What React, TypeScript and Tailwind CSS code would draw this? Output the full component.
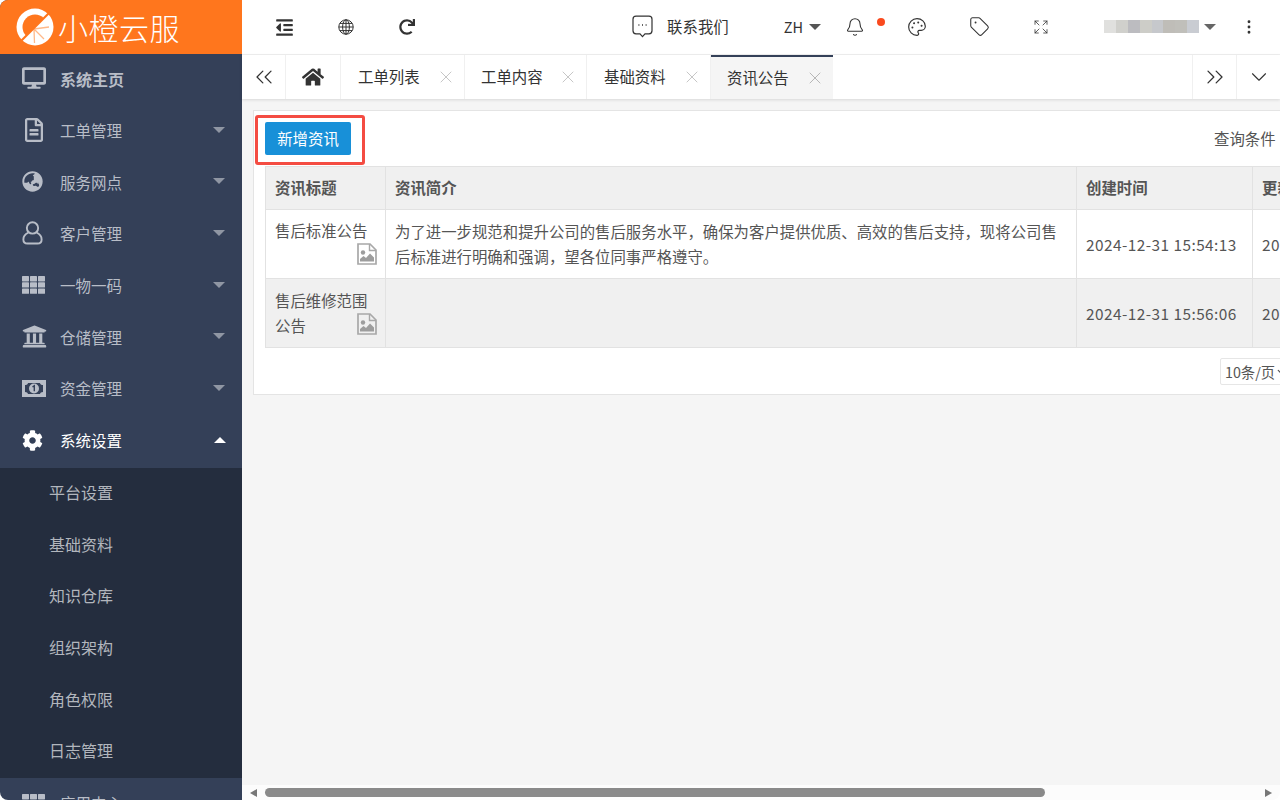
import { Bell, ChevronDown, ChevronsLeft, ChevronsRight, Expand, MoreVertical, Palette, Tag, X } from "lucide-react";
import { FaCog, FaDesktop, FaGlobeAsia, FaHome, FaOutdent, FaRedo, FaRegFileAlt, FaUniversity } from "react-icons/fa";

function UserIcon() {
  return (
    <svg width="21" height="24" viewBox="0 0 23 26" fill="none" stroke="currentColor" strokeWidth="2.1">
      <circle cx="11.5" cy="7.5" r="6.2" />
      <path d="M7 12.5 C3.5 14 1.5 17 1.5 20 C1.5 23 3.5 24.5 6 24.5 H17 C19.5 24.5 21.5 23 21.5 20 C21.5 17 19.5 14 16 12.5" />
    </svg>
  );
}

function GridIcon() {
  return (
    <svg width="23" height="18" viewBox="0 0 23 18" fill="currentColor">
      {[0, 6.2, 12.4].map((y) =>
        [0, 8, 16].map((x) => <rect key={`${x}-${y}`} x={x} y={y} width="7" height="5.4" rx="0.6" />),
      )}
    </svg>
  );
}

function MoneyIcon() {
  return (
    <svg width="24" height="17" viewBox="0 0 24 17">
      <path
        fillRule="evenodd"
        fill="currentColor"
        d="M0 0 H24 V17 H0 Z M6 3 C5.8 4.4 4.6 5 3 5 V12 C4.6 12 5.8 12.8 6 14 H18 C18.2 12.8 19.4 12 21 12 V5 C19.4 5 18.2 4.4 18 3 Z"
      />
      <circle cx="12" cy="8.5" r="5" fill="currentColor" />
      <path d="M10.5 6.8 L12.3 5.8 V11.2" fill="none" stroke="#344058" strokeWidth="1.4" />
    </svg>
  );
}

function ImageFileIcon({ className = "" }: { className?: string }) {
  return (
    <svg width="20" height="22" viewBox="0 0 20 22" className={className}>
      <path d="M1 1 H13 L19 7 V21 H1 Z" fill="none" stroke="#a8a8a8" strokeWidth="1.7" />
      <path d="M12.5 1 V7.5 H19" fill="none" stroke="#a8a8a8" strokeWidth="1.4" />
      <circle cx="6" cy="9.5" r="2.2" fill="#9d9d9d" />
      <path d="M3 18.5 V16 L6.5 13 L9 15 L13 10.5 L17 14.5 V18.5 Z" fill="#9d9d9d" />
    </svg>
  );
}

function GlobeIcon() {
  return (
    <svg width="16" height="16" viewBox="0 0 16 16" fill="none" stroke="#333" strokeWidth="1">
      <circle cx="8" cy="8" r="7.2" />
      <ellipse cx="8" cy="8" rx="3.4" ry="7.2" />
      <path d="M8 .8 V15.2 M.8 8 H15.2 M1.8 4.4 H14.2 M1.8 11.6 H14.2" />
    </svg>
  );
}

function ChatIcon() {
  return (
    <svg width="21" height="23" viewBox="0 0 21 23" fill="none" stroke="#333" strokeWidth="1.2">
      <path d="M4 1.2 H17 A3 3 0 0 1 20 4.2 V15.8 A3 3 0 0 1 17 18.8 H13 L10.5 21.6 L8 18.8 H4 A3 3 0 0 1 1 15.8 V4.2 A3 3 0 0 1 4 1.2 Z" />
      <path d="M6.4 10 H7.4 M10 10 H11 M13.6 10 H14.6" strokeWidth="1.6" />
    </svg>
  );
}

const menu = [
  { label: "系统主页", icon: <FaDesktop size={24} />, bold: true },
  { label: "工单管理", icon: <FaRegFileAlt size={24} />, caret: true },
  { label: "服务网点", icon: <FaGlobeAsia size={21} />, caret: true },
  { label: "客户管理", icon: <UserIcon />, caret: true },
  { label: "一物一码", icon: <GridIcon />, caret: true },
  { label: "仓储管理", icon: <FaUniversity size={25} />, caret: true },
  { label: "资金管理", icon: <MoneyIcon />, caret: true },
];

const subMenu = ["平台设置", "基础资料", "知识仓库", "组织架构", "角色权限", "日志管理"];

const tabs = [
  { label: "工单列表", w: "w-[124px]", pad: "pl-[17px] pr-[8px]" },
  { label: "工单内容", w: "w-[122px]", pad: "pl-[16px] pr-[8px]" },
  { label: "基础资料", w: "w-[124px]", pad: "pl-[17px] pr-[8px]" },
];

const blurBlocks = ["bg-[#e0e0de]", "bg-[#d0d0cc]", "bg-[#bcbcc0]", "bg-[#cdcdc8]", "bg-[#c6c8cc]", "bg-[#bfbdb8]", "bg-[#c0bfba]", "bg-[#c9ccd2]"];

function Logo() {
  return (
    <svg width="38" height="38" viewBox="0 0 38 38" className="shrink-0">
      <circle cx="19" cy="19" r="18.5" fill="#fff" />
      <circle cx="19" cy="19" r="12.5" fill="#ff761d" />
      <path d="M8 30 L30 8 A15.5 15.5 0 0 1 8 30 Z" fill="#fff" />
      <path d="M18 21 L33 19 M18 21 L28 31 M18 21 L18.5 35" stroke="#ffb98a" strokeWidth="1.3" />
      <path d="M5 33 L33 5" stroke="#ff761d" strokeWidth="2.2" />
    </svg>
  );
}

function Caret({ up = false, className = "" }: { up?: boolean; className?: string }) {
  return (
    <span
      className={`h-0 w-0 border-x-[6.5px] border-x-transparent ${up ? "border-b-[6px] border-b-white" : "border-t-[6px] border-t-[#8f96a3]"} ${className}`}
    />
  );
}

function Sidebar() {
  return (
    <aside className="flex h-full w-[242px] shrink-0 flex-col overflow-hidden bg-[#344058]">
      <div className="flex h-[54px] shrink-0 items-center gap-[4px] bg-[#ff761d] pl-[16px] text-white">
        <Logo />
        <span className="text-[30px] font-light leading-none tracking-[0.5px]">小橙云服</span>
      </div>
      {menu.map((item) => (
        <div key={item.label} className="flex h-[51.7px] shrink-0 items-center pb-[2px] pr-[16px] text-[#b8bdc7]">
          <span className="-mt-[1px] flex w-[60px] shrink-0 justify-start pl-[22px]">{item.icon}</span>
          <span className={item.bold ? "text-[16px] font-bold" : "text-[15.5px]"}>{item.label}</span>
          {item.caret && <Caret className="ml-auto -mt-[2px] -translate-x-[1px]" />}
        </div>
      ))}
      <div className="flex h-[51.7px] shrink-0 items-center pb-[2px] pr-[16px] text-white">
        <span className="-mt-[1px] flex w-[60px] shrink-0 pl-[22px]">
          <FaCog size={21} />
        </span>
        <span className="text-[15.5px]">系统设置</span>
        <Caret up className="ml-auto -mt-[2px]" />
      </div>
      <div className="shrink-0 bg-[#242d3e]">
        {subMenu.map((s) => (
          <div key={s} className="flex h-[51.7px] items-center pb-[3px] pl-[49px] text-[16px] text-[#b2b6bd]">
            {s}
          </div>
        ))}
      </div>
      <div className="flex h-[51.7px] shrink-0 items-center text-[#b8bdc7]">
        <span className="flex w-[60px] shrink-0 pl-[22px]">
          <GridIcon />
        </span>
        <span className="text-[15.5px]">应用中心</span>
      </div>
    </aside>
  );
}

function Header() {
  return (
    <header className="flex h-[55px] shrink-0 items-center border-b border-[#f0f0f0] bg-white text-[#333]">
      <div className="ml-[12px] flex items-center">
        <span className="flex w-[61px] justify-center">
          <FaOutdent size={19} />
        </span>
        <span className="flex w-[61px] justify-center">
          <GlobeIcon />
        </span>
        <span className="flex w-[61px] justify-center">
          <FaRedo size={16} />
        </span>
      </div>
      <div className="ml-auto flex items-center">
        <ChatIcon />
        <span className="ml-[14px] text-[15.4px]">联系我们</span>
        <span className="ml-[55px] text-[14.5px]">ZH</span>
        <span className="ml-[6px] h-0 w-0 border-x-[6px] border-t-[6px] border-x-transparent border-t-[#555]" />
        <span className="relative ml-[24px]">
          <Bell size={20} strokeWidth={1.3} />
          <span className="absolute -right-[20px] top-[1px] h-[8px] w-[8px] rounded-full bg-[#fa4a1e]" />
        </span>
        <Palette size={20} strokeWidth={1.4} className="ml-[42px]" />
        <Tag size={21} strokeWidth={1.2} className="ml-[42px]" />
        <Expand size={16} strokeWidth={1.2} className="ml-[43px]" />
        <span className="ml-[55px] flex h-[13px] w-[95px]">
          {blurBlocks.map((c) => (
            <span key={c} className={`h-full flex-1 ${c}`} />
          ))}
        </span>
        <span className="ml-[5px] h-0 w-0 border-x-[6.5px] border-t-[6px] border-x-transparent border-t-[#666]" />
        <MoreVertical size={18} strokeWidth={1.8} className="ml-[24px] mr-[22px]" />
      </div>
    </header>
  );
}

function TabBar() {
  return (
    <div className="z-10 flex h-[44px] shrink-0 bg-white text-[15.4px] text-[#333] shadow-[0_1px_3px_rgba(0,0,0,0.12)]">
      <span className="flex w-[44px] items-center justify-center border-r border-[#f0f0f0]">
        <ChevronsLeft size={28} strokeWidth={1.1} />
      </span>
      <span className="flex w-[55px] items-center justify-center border-r border-[#f0f0f0]">
        <FaHome size={22} />
      </span>
      {tabs.map((t) => (
        <span key={t.label} className={`flex items-center justify-between border-r border-[#f0f0f0] ${t.pad} ${t.w}`}>
          {t.label}
          <X size={20} strokeWidth={1} className="text-[#bbb]" />
        </span>
      ))}
      <span className="flex w-[122px] items-center justify-between border-t-[2px] border-[#344058] bg-[#f5f5f5] pl-[16px] pr-[8px]">
        资讯公告
        <X size={20} strokeWidth={1} className="text-[#aaa]" />
      </span>
      <span className="ml-auto flex w-[44px] items-center justify-center border-l border-[#f0f0f0]">
        <ChevronsRight size={28} strokeWidth={1.1} />
      </span>
      <span className="flex w-[44px] items-center justify-center border-l border-[#f0f0f0]">
        <ChevronDown size={26} strokeWidth={1} />
      </span>
    </div>
  );
}

function NewsTable() {
  return (
    <table className="w-[1200px] table-fixed border-collapse text-[15.4px] text-[#555]">
      <thead>
        <tr className="h-[43px] bg-[#f0f0f0] text-left">
          <th className="w-[120px] border border-[#e2e2e2] px-[9px] font-bold">资讯标题</th>
          <th className="w-[691px] border border-[#e2e2e2] px-[9px] font-bold">资讯简介</th>
          <th className="w-[176px] border border-[#e2e2e2] px-[9px] font-bold">创建时间</th>
          <th className="border border-[#e2e2e2] px-[9px] font-bold">更新时间</th>
        </tr>
      </thead>
      <tbody className="leading-[25px]">
        <tr className="h-[69px]">
          <td className="border border-[#e2e2e2] px-[9px] align-top">
            <div className="mt-[8px]">售后标准公告</div>
            <ImageFileIcon className="float-right -mr-[1px]" />
          </td>
          <td className="border border-[#e2e2e2] px-[9px]">
            为了进一步规范和提升公司的售后服务水平，确保为客户提供优质、高效的售后支持，现将公司售后标准进行明确和强调，望各位同事严格遵守。
          </td>
          <td className="border border-[#e2e2e2] px-[9px] tracking-[0.45px]">2024-12-31 15:54:13</td>
          <td className="border border-[#e2e2e2] px-[9px] tracking-[0.45px]">2024-12-31 15:54:13</td>
        </tr>
        <tr className="h-[69px] bg-[#f0f0f0]">
          <td className="relative border border-[#e2e2e2] px-[9px] align-middle">
            售后维修范围公告
            <ImageFileIcon className="absolute bottom-[12px] right-[8px]" />
          </td>
          <td className="border border-[#e2e2e2] px-[9px]" />
          <td className="border border-[#e2e2e2] px-[9px] tracking-[0.45px]">2024-12-31 15:56:06</td>
          <td className="border border-[#e2e2e2] px-[9px] tracking-[0.45px]">2024-12-31 15:56:06</td>
        </tr>
      </tbody>
    </table>
  );
}

function Content() {
  return (
    <main className="min-h-0 flex-1 overflow-hidden bg-[#f5f5f5] pl-[11px] pt-[11px]">
      <section className="w-[1200px] border border-[#e4e4e4] bg-white pl-[11px]">
        <div className="flex h-[55px] items-start pt-[11px]">
          <span className="relative flex h-[33px] w-[86px] items-center justify-center rounded-[2px] bg-[#1890d8] text-[15.4px] text-white">
            新增资讯
            <span className="absolute -left-[10px] -top-[7px] h-[50px] w-[110px] rounded-[3px] border-[3px] border-[#f44c42]" />
          </span>
          <span className="ml-[863px] mt-[5px] text-[15.4px] text-[#555]">查询条件</span>
        </div>
        <NewsTable />
        <div className="flex h-[46px] items-start pl-[955px] pt-[10px]">
          <span className="flex h-[27px] w-[70px] items-center rounded-[2px] border border-[#e6e6e6] pl-[4px] text-[14.3px] text-[#555]">
            10条/页
            <ChevronDown size={9} strokeWidth={3} className="ml-[1px] shrink-0" />
          </span>
        </div>
      </section>
    </main>
  );
}

function BottomScroll() {
  return (
    <div className="flex h-[15px] shrink-0 items-center bg-[#fcfcfc]">
      <span className="ml-[8px] h-0 w-0 border-y-[4.5px] border-r-[7px] border-y-transparent border-r-[#777]" />
      <span className="ml-[8px] h-[9px] w-[780px] rounded-full bg-[#8a8a8a]" />
      <span className="ml-[220px] h-0 w-0 border-y-[4.5px] border-l-[7px] border-y-transparent border-l-[#777]" />
    </div>
  );
}

export default function App() {
  return (
    <div className="flex h-[800px] w-[1280px] overflow-hidden rounded-[8px] bg-white font-['Noto_Sans_CJK_SC','Noto_Sans',sans-serif]">
      <Sidebar />
      <div className="flex min-w-0 flex-1 flex-col">
        <Header />
        <TabBar />
        <Content />
        <BottomScroll />
      </div>
    </div>
  );
}
